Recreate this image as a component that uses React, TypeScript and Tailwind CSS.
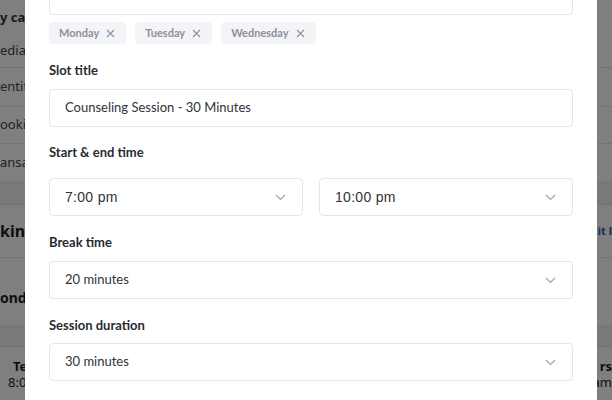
import React from "react";

function Chevron() {
  return (
    <svg width="11" height="7" viewBox="0 0 11 7" fill="none" className="shrink-0">
      <polyline points="1,1 5.5,5.5 10,1" stroke="#9ca3af" strokeWidth="1.2" fill="none" />
    </svg>
  );
}

function Tag({ label }: { label: string }) {
  return (
    <div className="flex h-[22px] items-center gap-[7px] rounded-[4px] bg-[#f3f4f7] pl-[10px] pr-[11px] text-[11px] font-bold text-[#8c9098]">
      <span>{label}</span>
      <svg width="9" height="9" viewBox="0 0 9 9" className="shrink-0">
        <path d="M1 1L8 8M8 1L1 8" stroke="#8c9098" strokeWidth="1.1" />
      </svg>
    </div>
  );
}

function Label({ children, className = "" }: { children: React.ReactNode; className?: string }) {
  return (
    <div className={`h-[20px] text-[13px] font-bold leading-[20px] text-[#262b33] ${className}`}>{children}</div>
  );
}

function Select({ value, mono = false, className = "" }: { value: string; mono?: boolean; className?: string }) {
  return (
    <div
      className={`flex h-[38px] items-center justify-between rounded-[4px] border border-[#e4e6ea] pl-[15px] pr-[16px] ${className}`}
    >
      <span
        className={
          mono
            ? "font-['Liberation_Sans',Arial,sans-serif] text-[14px] tracking-[0.3px] text-[#2f3338]"
            : "text-[13px] text-[#2f3338]"
        }
      >
        {value}
      </span>
      <Chevron />
    </div>
  );
}

export default function App() {
  return (
    <div className="relative h-[400px] w-[612px] overflow-hidden bg-white font-['Lato','Noto_Sans',sans-serif]">
      {/* background page */}
      <div className="flex w-full flex-col text-[#222] font-['Noto_Sans',sans-serif]">
        <div className="flex h-[68px] flex-col border-b border-[#e6e6e6]">
          <div className="mt-[8px] h-[18px] whitespace-nowrap text-[13px] font-bold leading-[18px] text-[#333]">y calendar</div>
          <div className="mt-[15px] h-[18px] whitespace-nowrap text-[13px] leading-[18px] text-[#444]">edia</div>
        </div>
        <div className="flex h-[39px] items-center border-b border-[#e6e6e6] whitespace-nowrap text-[13px] text-[#444]">entity</div>
        <div className="flex h-[37px] items-center border-b border-[#e6e6e6] whitespace-nowrap text-[13px] text-[#444]">ooking</div>
        <div className="flex h-[39px] items-center border-b border-[#e6e6e6] whitespace-nowrap text-[13px] text-[#444]">ansactions</div>
        <div className="h-[22px] border-b border-[#e6e6e6] bg-[#f2f2f3]"></div>
        <div className="flex h-[53px] items-center justify-between border-b border-[#e6e6e6] whitespace-nowrap">
          <span className="text-[16px] font-bold text-[#1c1c1c]">king</span>
          <span className="text-[11px] font-bold text-[#1d5fb0]">Edit l</span>
        </div>
        <div className="flex h-[69px] items-center border-b border-[#e6e6e6] whitespace-nowrap">
          <span className="mt-[10px] text-[14px] font-bold text-[#1c1c1c]">ondc</span>
        </div>
        <div className="h-[20px] border-b border-[#e6e6e6] bg-[#f2f2f3]"></div>
        <div className="flex h-[53px] justify-between whitespace-nowrap">
          <div className="mt-[11px] flex flex-col text-[13px] font-bold leading-[16px] text-[#1c1c1c]">
            <span className="pl-[13px]">Tea</span>
            <span className="pl-[8px] font-normal">8:00</span>
          </div>
          <div className="mt-[11px] flex flex-col items-end text-[13px] font-bold leading-[16px] text-[#1c1c1c]">
            <span>rs</span>
            <span className="font-normal">am</span>
          </div>
        </div>
      </div>

      {/* overlay */}
      <div className="absolute inset-0 bg-black/50"></div>

      {/* modal */}
      <div className="absolute left-[25px] top-0 flex h-[400px] w-[572px] flex-col bg-white px-[24px]">
        <div className="-mt-[23px] h-[38px] shrink-0 rounded-[4px] border border-[#e4e6ea]"></div>
        <div className="mt-[7px] flex gap-[9px]">
          <Tag label="Monday" />
          <Tag label="Tuesday" />
          <Tag label="Wednesday" />
        </div>

        <Label className="mt-[16px]">Slot title</Label>
        <div className="mt-[9px] flex h-[38px] items-center rounded-[4px] border border-[#e4e6ea] px-[15px] text-[13px] text-[#2f3338]">
          Counseling Session - 30 Minutes
        </div>

        <Label className="mt-[15px]">Start &amp; end time</Label>
        <div className="mt-[16px] grid grid-cols-2 gap-[16px]">
          <Select value="7:00 pm" mono />
          <Select value="10:00 pm" mono />
        </div>

        <Label className="mt-[16px]">Break time</Label>
        <Select value="20 minutes" className="mt-[9px]" />

        <Label className="mt-[16px]">Session duration</Label>
        <Select value="30 minutes" className="mt-[8px]" />
      </div>
    </div>
  );
}
